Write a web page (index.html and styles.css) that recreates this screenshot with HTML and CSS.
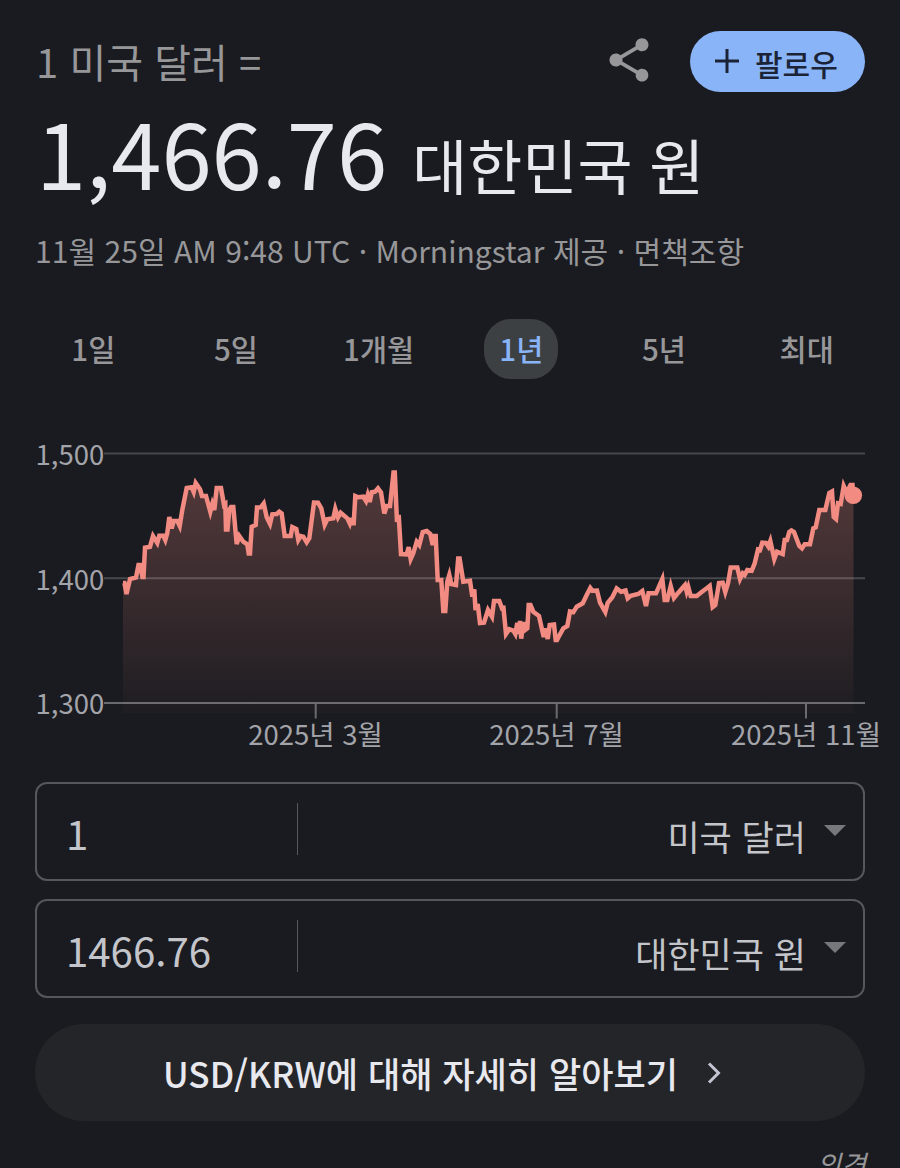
FILE: index.html
```html
<!DOCTYPE html>
<html lang="ko">
<head>
<meta charset="UTF-8" />
<meta name="viewport" content="width=device-width, initial-scale=1.0" />
<title>USD/KRW</title>
<link rel="stylesheet" href="styles.css">
</head>
<body>

<header class="top">
  <div class="from">1 미국 달러 =</div>
  <svg class="share" viewBox="0 0 24 24"><path d="M18 16.08c-.76 0-1.44.3-1.96.77L8.91 12.7c.05-.23.09-.46.09-.7s-.04-.47-.09-.7l7.05-4.11c.54.5 1.25.81 2.04.81 1.66 0 3-1.34 3-3s-1.34-3-3-3-3 1.34-3 3c0 .24.04.47.09.7L8.04 9.81C7.5 9.31 6.79 9 6 9c-1.66 0-3 1.34-3 3s1.34 3 3 3c.79 0 1.5-.31 2.04-.81l7.12 4.16c-.05.21-.08.43-.08.65 0 1.61 1.31 2.92 2.92 2.92s2.92-1.31 2.92-2.92-1.31-2.92-2.92-2.92z"/></svg>
  <button class="follow">
    <svg class="plus" viewBox="0 0 24 24"><path d="M12 0v24M0 12h24"/></svg>
    <span>팔로우</span>
  </button>
</header>

<div class="amount">1,466.76 <span class="unit">대한민국 원</span></div>
<div class="meta">11월 25일 AM 9:48 UTC · Morningstar 제공 · 면책조항</div>

<nav class="tabs">
  <a href="#"><span>1일</span></a>
  <a href="#"><span>5일</span></a>
  <a href="#"><span>1개월</span></a>
  <a href="#" class="active"><span>1년</span></a>
  <a href="#"><span>5년</span></a>
  <a href="#"><span>최대</span></a>
</nav>

<svg class="chart" viewBox="0 430 900 330">
  <defs>
    <linearGradient id="fade" gradientUnits="userSpaceOnUse" x1="0" y1="472" x2="0" y2="713">
      <stop offset="0" stop-color="#f28b82" stop-opacity=".27"/>
      <stop offset="1" stop-color="#f28b82" stop-opacity=".02"/>
    </linearGradient>
  </defs>
  <path class="area" id="area"/>
  <path class="grid" d="M104 453.5H865M104 578.3H865"/>
  <path class="axis" d="M104 703H865M315.7 703v15.500M556.7 703v15.500M806 703v15.500"/>
  <polyline class="line" id="line" points="123,583 124.500,583 126.500,594 130,579 136,577.500 138.500,565 140,565 142.500,577 143.500,577 145,547.700 150,546.700 153,536 157.300,543 159.300,535.700 163.300,535.700 165.300,540 167.300,533 169.300,517 171.700,528.300 173.700,521 177.300,521 179.700,526 182.300,510 186.700,488 191.700,487.300 193.700,492 195.700,483 200,489.300 202,496 206,496 210.300,511.700 212.300,504 214.300,510 216.700,488 221,488 224,505 225.300,504 226,529.500 227.500,529.500 229.300,510 231,507 233.300,507 236.700,544 239.300,536 243.300,541.700 247.300,544.300 248.700,553.500 250,553.500 251.700,526.700 255.700,525 257,507.500 260.700,507.300 263.700,503.500 266.700,517.300 270,524 272.300,514.300 276.700,514 279.300,511.700 281.700,513.500 284.700,536 290.700,536 292.300,527 296.300,529 298.300,540 300.700,536 303.300,536.700 306.700,542.300 309.300,538.300 314,502.500 318,502.700 321.300,508.300 324.700,524.700 327.300,519.300 333.300,518.300 335.300,509 338,517.500 340.700,512.700 347.300,518.300 349.700,523.300 351,518 352,523.300 353.700,523.300 355.300,496 358.300,497.300 363.300,496.700 366,501 367.700,495 369.700,502 371.700,492.300 375,491.700 378,488.300 381,492.300 384.300,513.500 386.700,506 390,506 393.500,472.500 394.800,472.500 397,522 398.700,515 401,554 406.700,554.300 408.700,547 410.700,559 413.300,553.300 416.700,541.700 419.300,545 422.700,532 426.700,531 430.300,534 432.700,545 434,536 435.700,536 437.700,580 441.300,580 443.300,611 445.300,611 447.300,581.700 449.300,575 451.300,584 456,585 458.200,558.500 459.600,558.500 463.300,581.700 470,580.700 472.300,596.700 474.300,589.300 475.500,610 477.700,604 480,623 484,622.700 488,610 492,616.700 494,601 499.300,601 502,608.300 503.500,608 506,634 509.300,629.300 513.300,630.700 515.300,634 517.300,623 518.700,634 520,621 521.200,638.700 523.300,622 525,630 527.300,628.300 528.700,605 530.500,605 533.300,611.700 539,616 543.700,637 545.700,628.300 547.700,639 549.700,625 554,624.500 555.700,640 557,640 558.700,636.700 563.300,628.300 567.300,626 570,611.500 573.300,612.300 576.700,606.700 582.700,603.300 586.700,595 590.300,588 592.300,590.700 597,590.500 600,602.700 605.300,612 607.700,602.700 612.300,597.300 616.700,588.500 621,591.700 625.500,590.500 627.700,598.300 630.700,595.700 638.300,594 642.300,591 646,606 648.500,593.300 656,593.300 662.300,579 664.700,600 667.300,600 670.700,586 674,598 678.300,592.700 685,585 686.700,591.700 688.300,587 690.700,596 696.700,596 700.700,592.700 706.700,588.300 709.700,586 712.700,607 715.300,605 719,583 722.700,582.700 725.300,592 728,583.300 730.700,567.500 737.300,567.500 740,579 742.700,573.300 744.700,575 747.300,570 751.700,570.700 754.700,563.300 758,549.500 760,550 762.300,542.700 766,543 768.300,546.500 770.300,541 774.300,559 777,551.700 782.700,554 784.700,540 787,540 789.300,532 791.500,530.500 794,532 799.300,546 802,548.300 804.700,544.300 810,544.300 813.300,528.300 815.700,527.300 819.300,510 825.300,510 829.300,493 832,491.500 833.700,517 836,519 838,503.300 840.700,504 843.700,486 846.700,492.700 850.500,485 852.500,485 853.500,495"/>
  <circle class="dot" cx="853.300" cy="495.300" r="8.800"/>
  <g class="ylabels">
    <text x="35.500" y="464.700">1,500</text>
    <text x="35.500" y="589.700">1,400</text>
    <text x="35.500" y="714.300">1,300</text>
  </g>
  <g class="xlabels">
    <text x="315.500" y="745">2025년 3월</text>
    <text x="556.500" y="745">2025년 7월</text>
    <text x="806" y="745">2025년 11월</text>
  </g>
</svg>

<div class="field">
  <div class="value">1</div>
  <div class="currency">미국 달러</div>
  <svg class="arrow" viewBox="0 0 22 11"><path d="M0 0h22L11 11z"/></svg>
</div>
<div class="field">
  <div class="value">1466.76</div>
  <div class="currency">대한민국 원</div>
  <svg class="arrow" viewBox="0 0 22 11"><path d="M0 0h22L11 11z"/></svg>
</div>

<a href="#" class="more">
  <span>USD/KRW에 대해 자세히 알아보기</span>
  <svg class="chevron" viewBox="0 0 14 22"><path d="M2 1.500l9.500 9.500L2 20.500"/></svg>
</a>

<div class="feedback">의견</div>

<script>
  // fill under the line, down to the bottom of the plot
  const points = document.getElementById('line').getAttribute('points');
  document.getElementById('area').setAttribute('d', 'M123 713L' + points + 'L853.5 713Z');
</script>

</body>
</html>
```
FILE: styles.css
```css
* {
  box-sizing: border-box;
}
body {
  margin: 0;
  height: 1168px;
  overflow: hidden;
  background-color: #1a1b20;
  color: #e8e9ef;
  font-family: "Noto Sans CJK KR", sans-serif;
}
a {
  color: inherit;
  text-decoration: none;
}
.top {
  display: flex;
  align-items: flex-start;
  padding: 31px 35px 0 36px;
  height: 92px;
}
.from {
  flex: 1;
  font-size: 40px;
  line-height: 61px;
  color: #97979a;
}
.share {
  width: 52px;
  height: 52px;
  margin: 3px 35px 0 0;
  fill: #97979a;
}
.follow {
  display: flex;
  align-items: center;
  width: 175px;
  height: 61px;
  padding: 0 0 0 25px;
  border: none;
  border-radius: 31px;
  background-color: #8ab4f8;
  color: #1b2436;
  font-family: inherit;
  font-size: 30px;
  font-weight: 500;
}
.follow span {
  line-height: 56px;
  padding-top: 3px;
}
.plus {
  width: 24px;
  height: 24px;
  margin: 0 16px 1px 0;
  stroke: #1b2436;
  stroke-width: 3;
}
.amount {
  padding-left: 36px;
  height: 117px;
  font-size: 90.3px;
  line-height: 118px;
  white-space: nowrap;
}
.unit {
  font-size: 59.8px;
  line-height: 1;
}
.meta {
  padding-left: 35px;
  margin-top: 16px;
  font-size: 30.1px;
  line-height: 50px;
  color: #97979a;
  white-space: nowrap;
}
.tabs {
  display: grid;
  grid-template-columns: repeat(6, 1fr);
  margin: 44px 22px 0;
  font-size: 29.5px;
  font-weight: 500;
  color: #97979a;
}
.tabs a {
  display: flex;
  justify-content: center;
}
.tabs span {
  height: 60px;
  line-height: 59px;
  padding: 0 15px;
  border-radius: 27px;
}
.tabs .active span {
  background-color: #3c4043;
  color: #8ab4f8;
}
.chart {
  display: block;
  width: 900px;
  height: 330px;
  margin-top: 51px;
}
.area {
  fill: url(#fade);
}
.grid,
.axis {
  fill: none;
  stroke: #ffffff;
  stroke-opacity: .2;
  stroke-width: 2;
}
.axis {
  stroke-opacity: .35;
}
.line {
  fill: none;
  stroke: #f28b82;
  stroke-width: 4.5;
}
.dot {
  fill: #f28b82;
}
.chart text {
  font-size: 27.5px;
  fill: #a3a4a9;
}
.xlabels {
  text-anchor: middle;
}
.field {
  display: flex;
  height: 99px;
  margin: 22px 35px 0;
  border: 2px solid #56575c;
  border-radius: 12px;
  color: #c4c5ca;
}
.field + .field {
  margin-top: 18px;
}
.value {
  width: 261px;
  height: 52px;
  margin-top: 19px;
  padding-left: 29px;
  border-right: 1px solid #56575c;
  font-size: 40.2px;
  line-height: 60px;
}
.currency {
  flex: 1;
  margin-top: 21px;
  text-align: right;
  font-size: 35px;
  line-height: 61px;
}
.arrow {
  width: 22px;
  height: 11px;
  margin: 41px 17px 0 18px;
  fill: #77787b;
}
.more {
  display: flex;
  align-items: center;
  height: 97px;
  margin: 26px 35px 0;
  padding-left: 128px;
  border-radius: 49px;
  background-color: #242529;
  font-size: 35.1px;
  font-weight: 500;
  white-space: nowrap;
}
.chevron {
  width: 14px;
  height: 22px;
  margin-left: 29px;
  fill: none;
  stroke: #c3c4d2;
  stroke-width: 3;
}
.feedback {
  margin-top: 24px;
  padding-right: 34px;
  text-align: right;
  font-size: 27px;
  font-style: italic;
  line-height: 38px;
  color: #97979a;
}
```
